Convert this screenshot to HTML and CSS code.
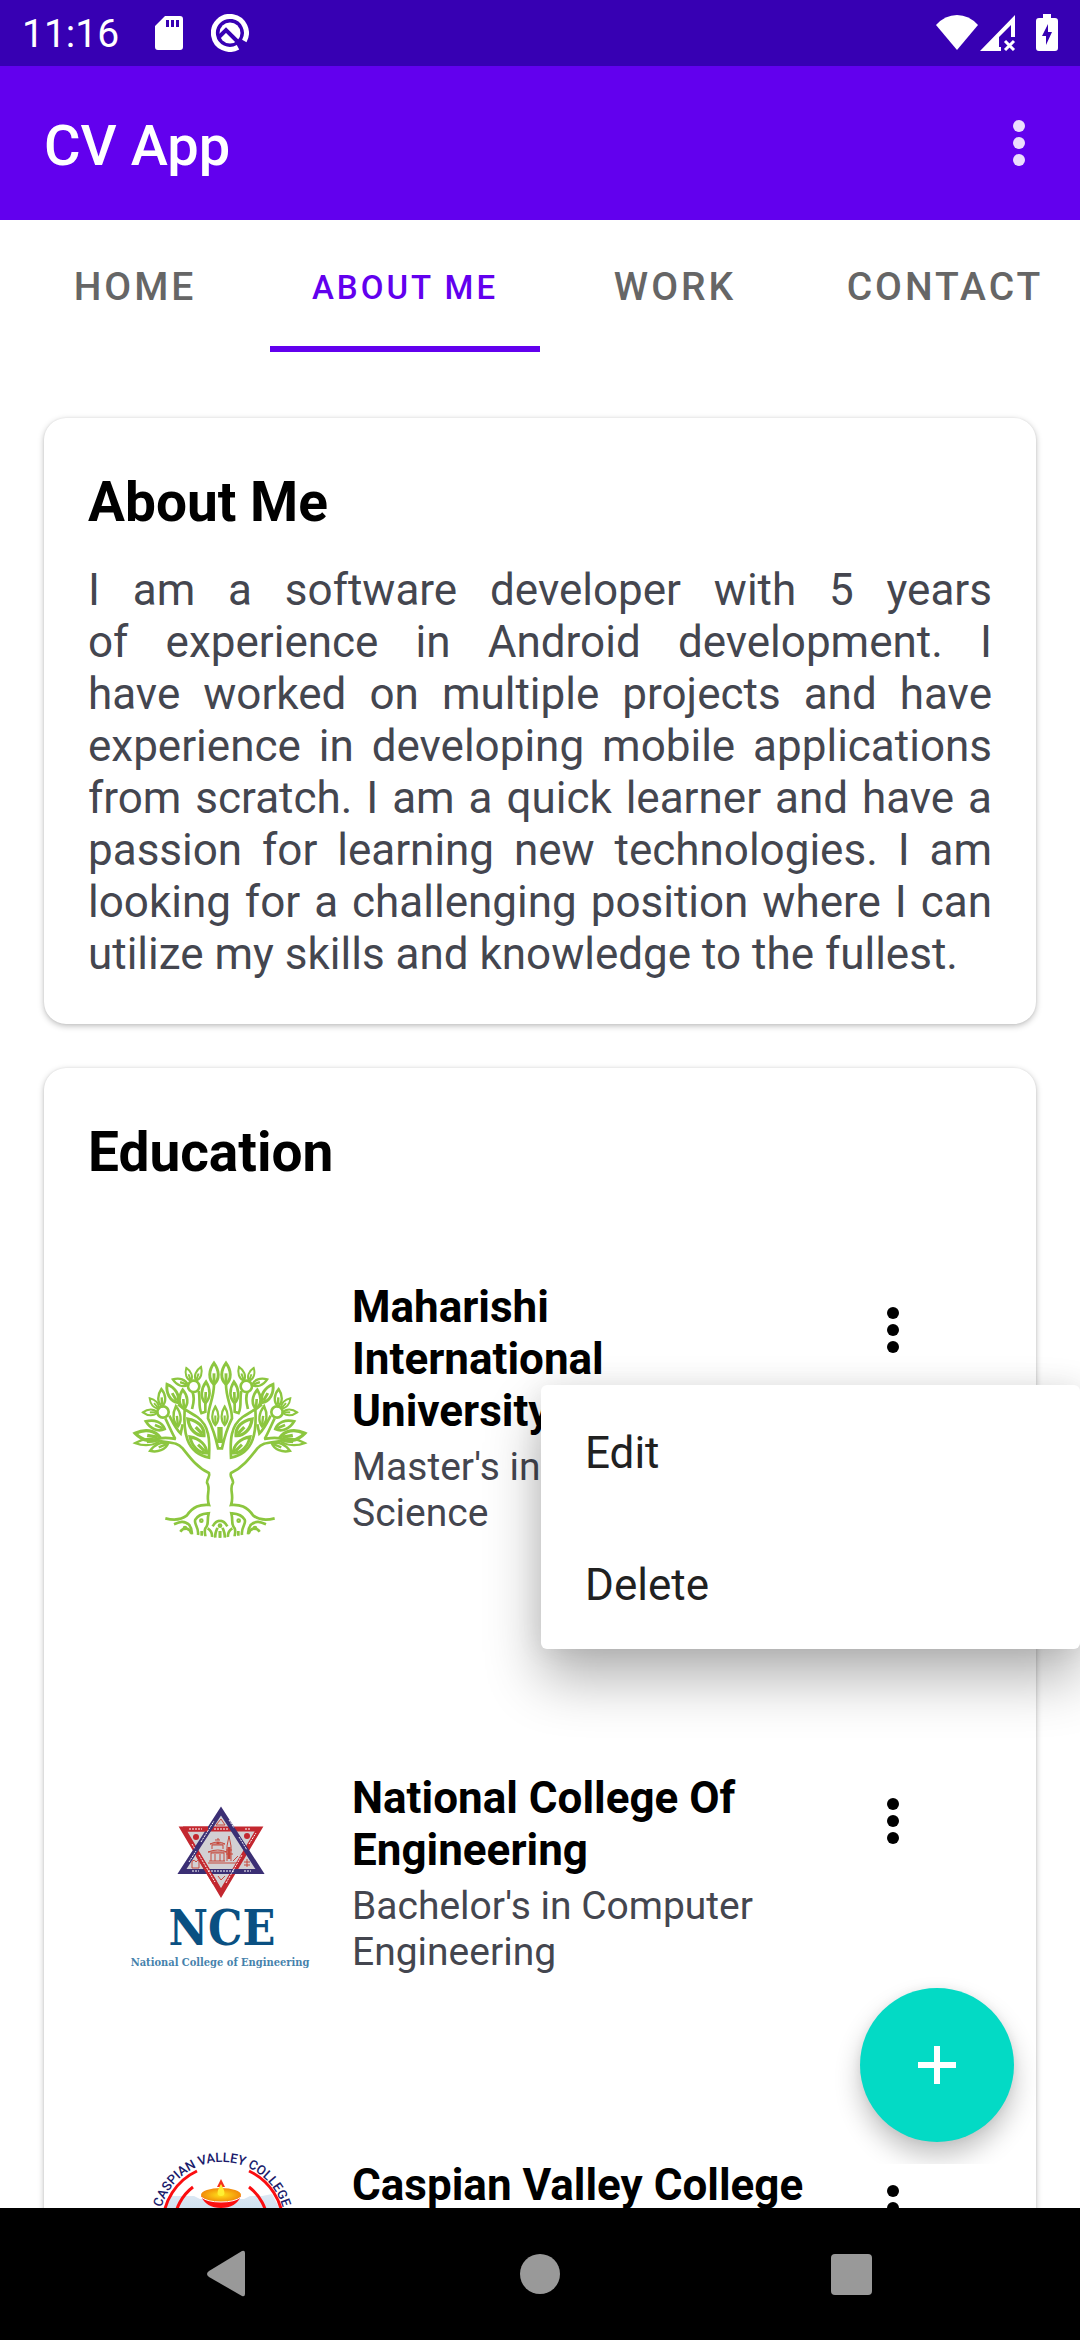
FILE: index.html
```html
<!DOCTYPE html>
<html lang="en">
<head>
<meta charset="utf-8">
<meta name="viewport" content="width=device-width, initial-scale=1">
<title>CV App</title>
<link rel="stylesheet" href="styles.css">
</head>
<body>
<svg class="defs" aria-hidden="true">
  <defs>
    <g id="dots"><circle cx="33" cy="16" r="6"/><circle cx="33" cy="33" r="6"/><circle cx="33" cy="50" r="6"/></g>
    <g id="leaf"><path d="M0 0C-16-14-15-38 0-58C15-38 16-14 0 0Z"/><path d="M0-6V-30"/></g>
    <g id="half-tree">
      <path d="M166 532C190 538 212 538 230 524C250 496 270 490 297 492C286 462 304 444 291 425C290 412 302 408 297 396C262 380 240 350 218 322C202 304 186 306 150 300"/>
      <path d="M192 550C206 544 222 536 238 552C246 562 245 572 246 580"/><path d="M211 572C222 556 240 562 244 578"/>
      <path d="M264 582C268 560 250 548 256 536C266 518 284 518 296 517C290 540 298 550 286 562C282 572 286 580 286 586M275 584V570"/>
      <path d="M293 562C303 568 307 578 306 588M308 556C320 536 328 540 330 540M316 590C314 574 320 570 322 560M330 590V570"/>
      <circle cx="274" cy="539" r="3"/><circle cx="225" cy="561" r="3"/>
      <circle cx="251" cy="136" r="17"/><circle cx="159" cy="213" r="17"/>
      <use href="#leaf" transform="translate(243 120) rotate(-20) scale(.72)"/>
      <use href="#leaf" transform="translate(258 119) rotate(20) scale(.76)"/>
      <use href="#leaf" transform="translate(234 132) rotate(-70) scale(.84)"/>
      <use href="#leaf" transform="translate(156 196) rotate(-2) scale(.9)"/>
      <use href="#leaf" transform="translate(146 202) rotate(-42) scale(.7)"/>
      <use href="#leaf" transform="translate(142 214) rotate(-90) scale(.75)"/>
      <use href="#leaf" transform="translate(164 264) rotate(-68) scale(1.05)"/>
      <use href="#leaf" transform="translate(150 290) rotate(-80) scale(1.25 1.3)"/>
      <use href="#leaf" transform="translate(148 300) rotate(-95) scale(.8 1.25)"/>
      <use href="#leaf" transform="translate(174 308) rotate(-112) scale(.9 1)"/>
      <use href="#leaf" transform="translate(203 185) rotate(-30) scale(1.1)"/>
      <use href="#leaf" transform="translate(222 204) rotate(-4) scale(1)"/>
      <use href="#leaf" transform="translate(204 256) rotate(-6) scale(.9 1.05)"/>
      <use href="#leaf" transform="translate(286 186) rotate(2) scale(1 1.1)"/>
      <use href="#leaf" transform="translate(312 130) rotate(0) scale(1.1)"/>
      <use href="#leaf" transform="translate(316 252) rotate(0) scale(.8 .95)"/>
      <use href="#leaf" transform="translate(282 284) rotate(-44) scale(1.2)"/>
      <use href="#leaf" transform="translate(290 336) rotate(-46) scale(1.1 1.2)"/>
      <path d="M224 204C220 270 226 336 297 350C300 296 298 254 262 228C244 216 232 212 204 190"/>
      <path d="M312 130C312 174 294 196 294 232C304 252 316 284 324 322H330M326 258V306"/>
      <path d="M247 152C256 172 250 190 246 204M266 150C272 174 264 196 274 216L286 212V186"/>
      <path d="M166 232C176 252 184 272 196 294M178 224C188 244 196 262 212 278L218 250M150 292C170 288 184 292 198 294"/>
    </g>
    <linearGradient id="sky" x1="0" y1="0" x2="0" y2="1"><stop offset="0" stop-color="#dde9f4"/><stop offset="1" stop-color="#a9c9e4"/></linearGradient>
    <radialGradient id="oil"><stop offset="0" stop-color="#ffe21a"/><stop offset="1" stop-color="#f28a08"/></radialGradient>
  </defs>
</svg>

<div class="app">
  <div class="status">
    <span class="status__time">11:16</span>
    <svg class="status__sd" width="28" height="34" viewBox="0 0 28 34" aria-hidden="true"><path fill="#fff" fill-rule="evenodd" d="M10 0H25Q28 0 28 3V31Q28 34 25 34H3Q0 34 0 31V10ZM11 4V11H14V4ZM16 4V11H19V4ZM21 4V11H24V4Z"/></svg>
    <svg class="status__q" width="38" height="38" viewBox="0 0 38 38" aria-hidden="true"><g fill="none" stroke="#fff"><path stroke-width="5" d="M27 33.300A16.500 16.500 0 1 1 33.300 27"/></g><circle cx="19" cy="19" r="10.500" fill="#fff"/><path fill="none" stroke="#3700b3" stroke-width="4" d="M8 23L15 16L33 34"/></svg>
    <span class="status__space"></span>
    <svg class="status__wifi" width="42" height="36" viewBox="0 0 42 36" aria-hidden="true"><path fill="#fff" d="M21 35L0 10Q9 0 21 0T42 10Z"/></svg>
    <svg class="status__cell" width="36" height="36" viewBox="0 0 36 36" aria-hidden="true"><path fill="#fff" fill-rule="evenodd" d="M0 36L35 0V22H31V10L19 22V32H21V36Z"/><path stroke="#fff" stroke-width="3" d="M25 26L34 35M34 26L25 35"/></svg>
    <svg class="status__battery" width="22" height="38" viewBox="0 0 22 38" aria-hidden="true"><path fill="#fff" d="M7 0H15V4H19Q22 4 22 7V34Q22 37 19 37H3Q0 37 0 34V7Q0 4 3 4H7Z"/><path fill="#3700b3" d="M12 10V18H16L10 31V22H6Z"/></svg>
  </div>

  <header class="appbar">
    <h1 class="appbar__title">CV App</h1>
    <button class="icon-button icon-button--light" type="button" aria-label="More options"><svg width="66" height="66" viewBox="0 0 66 66"><use href="#dots"/></svg></button>
  </header>

  <nav class="tabs" role="tablist">
    <button class="tab" type="button" role="tab">HOME</button>
    <button class="tab tab--active" type="button" role="tab" aria-selected="true">ABOUT ME</button>
    <button class="tab" type="button" role="tab">WORK</button>
    <button class="tab" type="button" role="tab">CONTACT</button>
  </nav>

  <main class="content">
    <section class="card">
      <h2 class="card__title">About Me</h2>
      <p class="card__text">I am a software developer with 5 years of&nbsp;experience in Android development. I have&nbsp;worked on multiple projects and have experience in developing mobile applications from scratch. I am a quick learner and have a passion for learning new technologies. I am looking for a challenging position where I can utilize my skills and knowledge to the fullest.</p>
    </section>

    <section class="card">
      <h2 class="card__title">Education</h2>
      <ul class="schools">
        <li class="school school--tall">
          <svg class="school__logo" viewBox="66 63 528 528" role="img" aria-label="Tree logo"><g fill="none" stroke="#8cc63f" stroke-width="8"><use href="#half-tree"/><use href="#half-tree" transform="translate(660 0) scale(-1 1)"/></g><circle cx="330" cy="554" r="7" fill="#8cc63f"/></svg>
          <div class="school__body">
            <h3 class="school__name">Maharishi International University</h3>
            <p class="school__degree">Master's in Computer Science</p>
          </div>
          <button class="icon-button school__more" type="button" aria-label="More options" aria-expanded="true"><svg width="66" height="66" viewBox="0 0 66 66"><use href="#dots"/></svg></button>
          <div class="menu" role="menu">
            <button class="menu__item" type="button" role="menuitem">Edit</button>
            <button class="menu__item" type="button" role="menuitem">Delete</button>
          </div>
        </li>
        <li class="school">
          <svg class="school__logo" viewBox="0 0 176 176" role="img" aria-label="National College of Engineering logo">
            <path fill="#d2d0d3" d="M89 8L130 72H48ZM48 26H130L89 95Z"/>
            <g fill="none" stroke-width="5"><path stroke="#c3272f" d="M51 28H127L89 92Z"/><path stroke="#3b2f74" d="M89 10L128 70.500H50Z"/><path stroke="#c3272f" d="M51 28H76M66 54L83 82"/></g>
            <g stroke="#fff" stroke-width="1" stroke-dasharray="2 1"><path d="M57 28H70M82 28H96M113 28H118M60 70H67M76 70H102M112 70H119M60 43L63 48M67 54L83 81M94 82L110 54M117 43L124 32M97 19L102 27M107 36L115 49M57 61L64 50M69 41L82 20"/></g>
            <g fill="none" stroke="#c6483c" stroke-width="1"><path d="M76 62H105M77 60H93M79 60V52H92V60M83 60V53M88 60V53M76 51Q86 47 95 51ZM80 48V44H91V48M78 43Q86 39 93 43ZM83 39H88M86 37V39M95 60V45L97 35L99 45V60M94 53H101M94 49H100M101 60L106 55M60 67V60Q63 58 64 61Q66 58 67 60V67H60M112 61H118M115 58V66M112 64H118M86 75L89 79L93 75M84 24H93L89 18Z"/><path stroke-width="3" d="M97 46V58M86 41V43M115 36V35M62 37L64 35"/></g><circle cx="115" cy="35" r="3" fill="#c3272f"/><circle cx="64" cy="36" r="3" fill="#c3272f"/>
            <text class="nce" x="90" y="144">NCE</text>
            <text class="nce-sub" x="88" y="165">National College of Engineering</text>
          </svg>
          <div class="school__body">
            <h3 class="school__name">National College Of Engineering</h3>
            <p class="school__degree">Bachelor's in Computer Engineering</p>
          </div>
          <button class="icon-button school__more" type="button" aria-label="More options"><svg width="66" height="66" viewBox="0 0 66 66"><use href="#dots"/></svg></button>
        </li>
        <li class="school">
          <svg class="school__logo" viewBox="0 0 176 176" role="img" aria-label="Caspian Valley College logo">
            <path fill="url(#sky)" d="M38 43H62L68 46H112L118 43H130L140 41L148 56V100H32V56Z"/>
            <g fill="none" stroke="#fb0d10" stroke-width="3"><path d="M65 18A59 59 0 0 0 65 125M117 18A59 59 0 0 1 117 125"/><path d="M61 34A47 47 0 0 0 61 109M117 34A47 47 0 0 1 117 109"/></g>
            <path fill="#5a9fd0" d="M64 55H113V60H64Z"/>
            <path fill="#fb1010" d="M69 43Q74 55 89 55T109 43Z"/><ellipse cx="89" cy="42" rx="20" ry="7" fill="url(#oil)"/><path fill="none" stroke="#fff" d="M69 44Q75 49 89 49T109 44"/>
            <path fill="#f5301a" d="M89 26L93 34H85Z"/><path fill="#fff033" d="M89 31Q96 43 89 43T89 31Z"/>
            <path id="rim" fill="none" d="M30 91A63 63 0 1 1 150 91"/>
            <text class="caspian"><textPath href="#rim" startOffset="50%">CASPIAN VALLEY COLLEGE</textPath></text>
          </svg>
          <div class="school__body">
            <h3 class="school__name">Caspian Valley College</h3>
          </div>
          <button class="icon-button school__more" type="button" aria-label="More options"><svg width="66" height="66" viewBox="0 0 66 66"><use href="#dots"/></svg></button>
        </li>
      </ul>
    </section>
    <div class="fab-layer">
      <button class="fab" type="button" aria-label="Add"><svg width="66" height="66" viewBox="0 0 66 66"><path fill="#fff" d="M30 14H36V30H52V36H36V52H30V36H14V30H30Z"/></svg></button>
    </div>
  </main>

  <nav class="sysnav" aria-label="System">
    <button class="sysnav__button" type="button" aria-label="Back"><svg width="48" height="48" viewBox="0 0 48 48"><path fill="#999" d="M38 1Q41 0 41 3V44Q41 47 38 46L5 27Q1 24 5 21Z"/></svg></button>
    <button class="sysnav__button" type="button" aria-label="Home"><svg width="48" height="48" viewBox="0 0 48 48"><circle cx="24" cy="24" r="20" fill="#999"/></svg></button>
    <button class="sysnav__button" type="button" aria-label="Recents"><svg width="48" height="48" viewBox="0 0 48 48"><rect x="3" y="4" width="41" height="41" rx="4" fill="#999"/></svg></button>
  </nav>
</div>
</body>
</html>
```
FILE: styles.css
```css
* { box-sizing: border-box; margin: 0; padding: 0; }
body { font-family: Roboto, "Liberation Sans", sans-serif; background: #fff; color: #000; }
button { font: inherit; border: 0; background: none; color: inherit; cursor: pointer; }
svg { display: block; }
.defs { position: absolute; width: 0; height: 0; }

.app { display: flex; flex-direction: column; height: 100vh; overflow: hidden; }

.status { display: flex; align-items: center; flex: none; height: 66px; padding: 0 22px; background: #3700b3; color: #fff; }
.status__time { font-size: 39px; line-height: 64px; padding-top: 2px; }
.status__sd { margin-left: 36px; }
.status__q { margin-left: 28px; }
.status__space { flex: 1; }
.status__cell { margin-left: 2px; }
.status__battery { margin-left: 20px; }

.appbar { display: flex; align-items: center; justify-content: space-between; flex: none; height: 154px; padding: 0 28px 0 44px; background: #6200ee; color: #fff; }
.appbar__title { padding-top: 6px; font-size: 56px; line-height: 76px; font-weight: 500; }

.icon-button { width: 66px; height: 66px; fill: #000; }
.icon-button--light { fill: #ebddfd; }

.tabs { display: grid; grid-template-columns: repeat(4, 1fr); flex: none; height: 132px; }
.tab { font-size: 39px; font-weight: 500; letter-spacing: 3px; color: #666; border-bottom: 6px solid transparent; padding-top: 8px; white-space: nowrap; }
.tab--active { font-size: 33px; color: #6200ee; border-bottom-color: #6200ee; }

.content { position: relative; flex: 1; min-height: 0; overflow: hidden; display: flex; flex-direction: column; gap: 44px; padding: 66px 44px 0; }
.card { flex: none; padding: 44px; border-radius: 22px; background: #fff; box-shadow: 0 2px 6px rgba(0, 0, 0, .26), 0 0 2px rgba(0, 0, 0, .08); }
.card__title { font-size: 55px; line-height: 80px; font-weight: 700; }
.card__text { margin-top: 22px; font-size: 44px; line-height: 52px; color: #44464f; text-align: justify; }

.schools { list-style: none; margin: 12px -44px 0; }
.school { position: relative; display: grid; grid-template-columns: 176px 1fr 66px; column-gap: 44px; padding: 0 110px 0 88px; min-height: 318px; }
.school__logo { width: 176px; height: 176px; align-self: center; overflow: visible; }
.school__body { padding: 77px 8px 107px 0; }
.school--tall .school__body { padding-bottom: 159px; }
.school__name { font-size: 44px; line-height: 52px; font-weight: 700; }
.school__degree { margin-top: 7px; font-size: 39px; line-height: 46px; color: #44464f; }
.school__more { margin-top: 93px; }

.menu { position: absolute; z-index: 2; top: 181px; right: -44px; width: 539px; border-radius: 6px; background: #fff; box-shadow: 0 30px 56px rgba(0, 0, 0, .3), 0 0 28px rgba(0, 0, 0, .08); }
.menu__item { display: block; width: 100%; height: 132px; padding: 4px 44px 0; font-size: 44px; text-align: left; color: #212121; }

.fab-layer { position: absolute; z-index: 3; right: 0; bottom: 44px; padding: 44px 66px 22px 66px; overflow: hidden; }
.fab { display: flex; align-items: center; justify-content: center; width: 154px; height: 154px; border-radius: 50%; background: #03dac5; box-shadow: 0 14px 26px rgba(0, 0, 0, .24), 0 0 10px rgba(0, 0, 0, .06); }

.sysnav { display: grid; grid-template-columns: repeat(3, 1fr); flex: none; height: 132px; padding: 0 72px; background: #000; }
.sysnav__button { display: flex; align-items: center; justify-content: center; }

.nce { font: 700 48px "DejaVu Serif Condensed", "DejaVu Serif", serif; fill: #0a5082; text-anchor: middle; }
.nce-sub { font: 700 11px "DejaVu Serif Condensed", "DejaVu Serif", serif; fill: #4682ac; text-anchor: middle; }
.caspian { font: 500 13px Roboto, sans-serif; fill: #1b1b6b; text-anchor: middle; }
```
